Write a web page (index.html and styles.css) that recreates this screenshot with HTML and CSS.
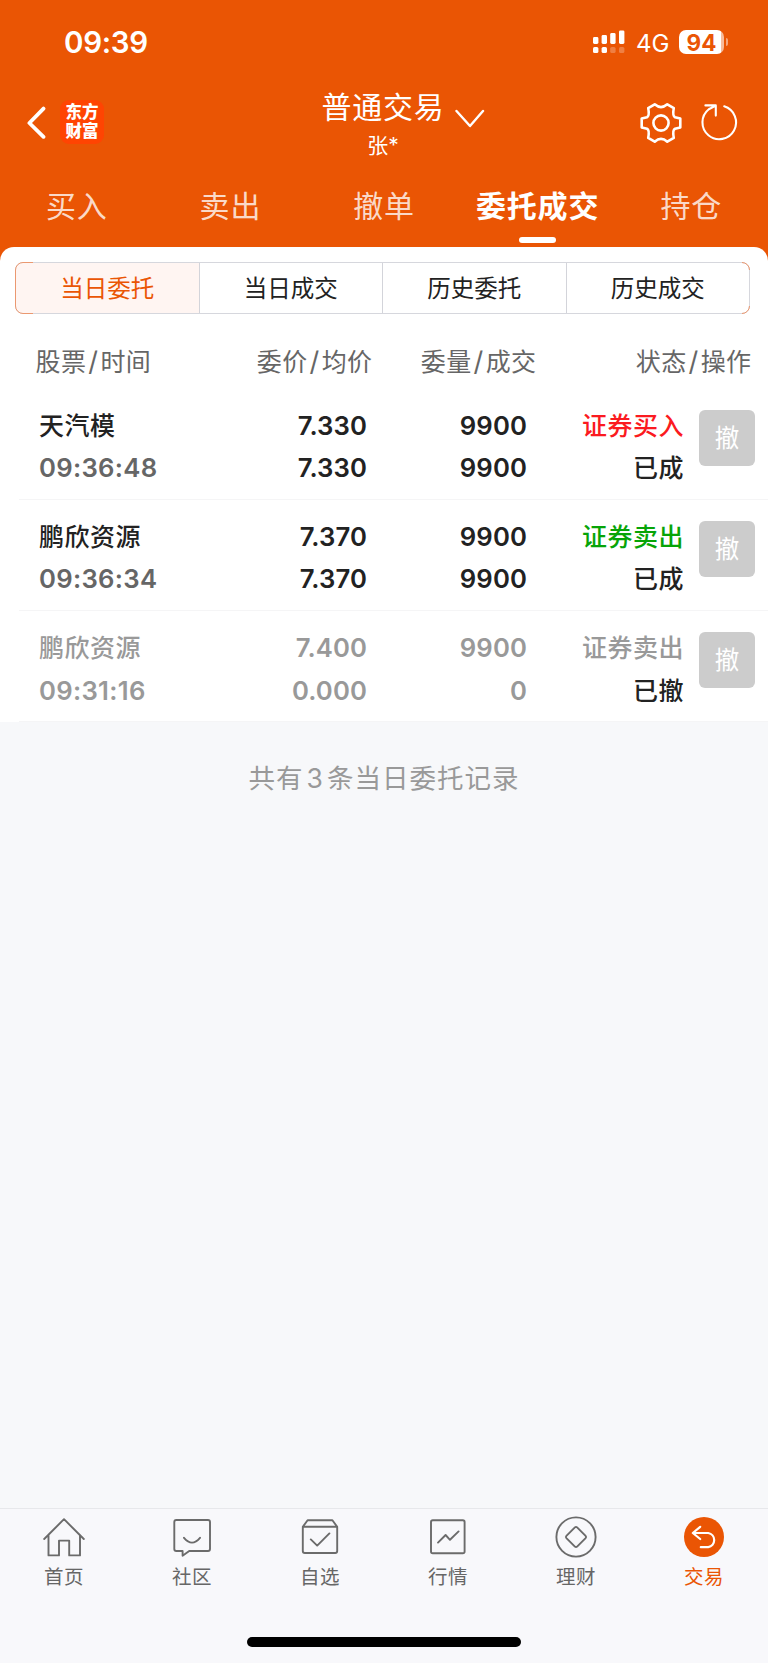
FILE: index.html
```html
<!DOCTYPE html>
<html lang="zh-CN">
<head>
<meta charset="utf-8">
<title>普通交易</title>
<link rel="stylesheet" href="styles.css">
</head>
<body>
<div class="app">
  <header class="top">
    <div class="status">
      <span class="clock">09:39</span>
      <svg class="signal" width="32" height="24" viewBox="0 0 32 24" fill="#fff">
        <rect x="0" y="7" width="5.4" height="7" rx="1.4"/><rect x="8.6" y="5" width="5.4" height="9" rx="1.4"/>
        <rect x="17.2" y="3" width="5.4" height="11" rx="1.4"/><rect x="26" y="0.4" width="5.4" height="13.6" rx="1.4"/>
        <rect x="0" y="17" width="5.4" height="6" rx="1.6"/><rect x="8.6" y="17" width="5.4" height="6" rx="1.6"/>
        <rect x="17.2" y="17" width="5.4" height="6" rx="1.6" opacity=".25"/><rect x="26" y="17" width="5.4" height="6" rx="1.6" opacity=".25"/>
      </svg>
      <span class="net">4G</span>
      <span class="battery"><b>94</b></span>
      <i class="nub"></i>
    </div>
    <div class="nav">
      <svg class="back" width="20" height="34" viewBox="0 0 20 34" fill="none" stroke="#fff" stroke-width="3.8" stroke-linecap="round" stroke-linejoin="round"><path d="M17.5 2.6 3.4 17 17.5 30.8"/></svg>
      <div class="logo"><span>东方</span><span>财富</span></div>
      <div class="heading">
        <div class="title">普通交易</div>
        <div class="who">张*</div>
      </div>
      <svg class="down" width="30" height="20" viewBox="0 0 30 20" fill="none" stroke="#fff" stroke-width="2.4" stroke-linecap="round" stroke-linejoin="round"><path d="M1.5 2 15 17 28 2"/></svg>
      <svg class="gear" width="42" height="42" viewBox="-21 -21 42 42" fill="none" stroke="#fff" stroke-width="2.6" stroke-linejoin="round">
        <path d="M-6.3 -18.7Q0 -13.2 6.3 -18.7L12.8 -14.9Q11.3 -7 14 -5.8L19.3 -4.4V4.4L14 5.8Q11.3 7 12.8 14.9L6.3 18.7Q0 13.2 -6.3 18.7L-12.8 14.9Q-11.3 7 -14 5.8L-19.3 4.4V-4.4L-14 -5.8Q-11.3 -7 -12.8 -14.9Z"/>
        <circle r="7.6"/>
      </svg>
      <svg class="reload" width="40" height="40" viewBox="0 0 40 40" fill="none" stroke="#fff" stroke-width="2.1" stroke-linecap="round" stroke-linejoin="round"><path d="M24.2 4.3A16.8 16.8 0 1 1 8.8 7.2L15.8 3.6M5.4 3.4H15.8V13.6"/></svg>
    </div>
    <nav class="tabs">
      <span>买入</span><span>卖出</span><span>撤单</span><span class="on">委托成交</span><span>持仓</span>
    </nav>
  </header>
  <main class="sheet">
    <div class="segments">
      <span class="sel">当日委托</span><span>当日成交</span><span>历史委托</span><span>历史成交</span>
    </div>
    <div class="cols">
      <span>股票<i>/</i>时间</span><span>委价<i>/</i>均价</span><span>委量<i>/</i>成交</span><span>状态<i>/</i>操作</span>
    </div>
    <div class="row">
      <div class="cell left"><span class="cn">天汽模</span><span class="time">09:36:48</span></div>
      <div class="cell"><span>7.330</span><span>7.330</span></div>
      <div class="cell"><span>9900</span><span>9900</span></div>
      <div class="cell"><span class="cn buy">证券买入</span><span class="cn">已成</span></div>
      <span class="cancel">撤</span>
    </div>
    <div class="row">
      <div class="cell left"><span class="cn">鹏欣资源</span><span class="time">09:36:34</span></div>
      <div class="cell"><span>7.370</span><span>7.370</span></div>
      <div class="cell"><span>9900</span><span>9900</span></div>
      <div class="cell"><span class="cn sell">证券卖出</span><span class="cn">已成</span></div>
      <span class="cancel">撤</span>
    </div>
    <div class="row dim">
      <div class="cell left"><span class="cn">鹏欣资源</span><span class="time">09:31:16</span></div>
      <div class="cell"><span>7.400</span><span>0.000</span></div>
      <div class="cell"><span>9900</span><span>0</span></div>
      <div class="cell"><span class="cn">证券卖出</span><span class="cn dark">已撤</span></div>
      <span class="cancel">撤</span>
    </div>
  </main>
  <p class="summary">共有<i>3</i>条当日委托记录</p>
  <footer class="bar">
    <div class="items">
      <div class="item"><svg width="44" height="44" viewBox="0 0 44 44"><path d="M2.2 23 22 3.2 41.8 23M6.5 19V39.4H17V24.6H27.2V39.4H38V19"/></svg><span>首页</span></div>
      <div class="item"><svg width="44" height="44" viewBox="0 0 44 44"><path d="M6.3 4H38a2 2 0 0 1 2 2V33a2 2 0 0 1-2 2H19.2L12.6 39.8V35H6.3a2 2 0 0 1-2-2V6a2 2 0 0 1 2-2ZM14 21.8Q22 31.4 30 21.8"/></svg><span>社区</span></div>
      <div class="item"><svg width="44" height="44" viewBox="0 0 44 44"><path d="M4.8 10.8 9.6 4.2H34.4L39.2 10.8V35a2 2 0 0 1-2 2H6.8a2 2 0 0 1-2-2ZM4.8 10.8H39.2M12.8 23.4 19.2 29.6 31.4 17.4"/></svg><span>自选</span></div>
      <div class="item"><svg width="44" height="44" viewBox="0 0 44 44"><rect x="5" y="4.2" width="33.6" height="33" rx="1.8"/><path d="M12 26.6 19.6 19 24 23.8 32.6 15.4"/></svg><span>行情</span></div>
      <div class="item"><svg width="44" height="44" viewBox="0 0 44 44"><circle cx="22" cy="21" r="19.6"/><path d="M20.9 11.4a1.6 1.6 0 0 1 2.2 0L31.6 19.9a1.6 1.6 0 0 1 0 2.2L23.1 30.6a1.6 1.6 0 0 1-2.2 0L12.4 22.1a1.6 1.6 0 0 1 0-2.2Z"/></svg><span>理财</span></div>
      <div class="item active"><svg width="44" height="44" viewBox="0 0 44 44"><circle class="disc" cx="22" cy="21" r="20"/><path class="light" d="M18.2 10.8 10.8 17 18.2 23M10.8 17H26.2A7.2 7.2 0 0 1 26.2 31.2H18.8"/></svg><span>交易</span></div>
    </div>
    <div class="home"></div>
  </footer>
</div>
</body>
</html>
```
FILE: styles.css
```css
* { box-sizing: border-box; }
body {
  margin: 0;
  font-family: Inter, "Noto Sans CJK SC", sans-serif;
  color: #222;
  background: #f7f8fa;
}
i { font-style: normal; }
svg { display: block; flex: none; }
.app { width: 768px; height: 1663px; display: flex; flex-direction: column; background: #f7f8fa; }

.top { height: 261px; background: #ea5504; color: #fff; flex: none; }
.status { height: 84px; padding-left: 64px; display: flex; align-items: center; }
.clock { font-size: 29.5px; font-weight: 600; letter-spacing: -.3px; width: 529px; line-height: 36px; }
.net { font-size: 24px; line-height: 30px; margin-left: 11px; width: 43px; padding-top: 3px; }
.battery {
  width: 45px; height: 24.5px; border-radius: 7px; line-height: 25px; text-align: center; font-size: 22.5px; color: #ea5504;
  background: linear-gradient(90deg, #fff 42px, #f7bb9b 42px);
}
.battery b { font-weight: 700; }
.nub { width: 2.5px; height: 8px; margin-left: 1.5px; border-radius: 0 3px 3px 0; background: #f5a67e; }

.nav { height: 80px; padding-left: 26px; display: flex; align-items: flex-start; }
.back { margin-top: 22px; }
.logo {
  width: 44px; height: 44px; margin: 16px 0 0 14px; padding-top: 3px; border-radius: 9px; background: #ff4402;
  text-align: center; font-weight: 900; font-size: 16.5px; line-height: 19px; display: flex; flex-direction: column;
}
.heading { width: 124px; margin-left: 217px; text-align: center; }
.title { font-size: 30px; line-height: 40px; letter-spacing: .8px; margin-top: 3px; white-space: nowrap; }
.who { font-size: 21px; line-height: 30px; margin-top: 4px; }
.down { margin: 25px 0 0 10px; }
.gear { margin: 17.5px 0 0 155px; }
.reload { margin: 18px 0 0 18px; }

.tabs { display: grid; grid-template-columns: repeat(5, 1fr); height: 83px; }
.tabs span {
  display: flex; flex-direction: column; align-items: center; font-size: 30px; line-height: 44px;
  letter-spacing: .8px; color: rgba(255, 255, 255, .8); padding-top: 20px; white-space: nowrap;
}
.tabs .on { color: #fff; font-weight: 700; }
.tabs .on::after { content: ""; width: 37px; height: 6px; border-radius: 3px; background: #fff; margin-top: 9px; }

.sheet { margin-top: -14px; padding-top: 15px; background: #fff; border-radius: 14px 14px 0 0; flex: none; }
.segments {
  position: relative; width: 735px; height: 51.5px; margin-left: 15px; border: 1px solid #d6d7dd; border-radius: 8px;
  display: grid; grid-template-columns: 182.5px 183.5px 183.5px 183.5px;
}
/* orange rim on the rounded ends */
.segments::after {
  content: ""; position: absolute; inset: -1px; border: 1px solid #eb9870; border-radius: 8px;
  clip-path: polygon(0 0, 18px 0, 18px 26px, 727px 26px, 727px 0, 735px 0, 735px 8px, 727px 8px, 727px 44px, 735px 44px, 735px 52px, 727px 52px, 727px 26px, 18px 26px, 18px 52px, 0 52px);
}
.segments span { text-align: center; font-size: 23.5px; line-height: 51px; height: 49.5px; border-left: 1px solid #d3d4da; }
.segments .sel { color: #ea5504; background: #fff5f2; border-left: 0; border-radius: 7px 0 0 7px; }

.cols {
  display: grid; grid-template-columns: 150px 187px 164px 215px; padding-left: 35.5px; height: 75px;
  font-size: 25px; line-height: 96px; color: #666; text-align: right; letter-spacing: .4px;
}
.cols span:first-child { text-align: left; }
.cols i { font-size: 27px; padding: 0 2px; }

.row {
  display: grid; grid-template-columns: 150px 178px 160px 157px 56px; height: 111.3px; margin-left: 19px; padding-left: 20px;
  border-bottom: 1.5px solid #f5f5f6; color: #222; font-size: 25.7px; font-weight: 600; letter-spacing: .1px;
}
.cell { display: flex; flex-direction: column; align-items: flex-end; padding-top: 16.2px; white-space: nowrap; }
.cell.left { align-items: flex-start; }
.cell span { line-height: 42.5px; height: 42.5px; }
.cell .cn { font-size: 25px; font-weight: 500; letter-spacing: .5px; }
.cell .time { color: #666; letter-spacing: .3px; }
.cell .buy { color: #fb1a20; }
.cell .sell { color: #07a407; }
.dim, .dim .cell .time { color: #999; }
.cell .dark { color: #222; }
.cancel {
  width: 56px; height: 56px; margin: 21px 0 0 15px; border-radius: 6px; background: #ccc; color: #fff;
  font-size: 24.5px; font-weight: 400; line-height: 56px; text-align: center; letter-spacing: 0;
}

.summary { margin: 34px 0 0; text-align: center; font-size: 26.5px; line-height: 44px; letter-spacing: 1px; color: #999; }
.summary i { padding: 0 3px; }

.bar { margin-top: auto; height: 155px; border-top: 1.5px solid #e7e8eb; background: #f8f8fb; flex: none; }
.items { display: grid; grid-template-columns: repeat(6, 1fr); height: 128px; }
.item { display: flex; flex-direction: column; align-items: center; padding-top: 7px; color: #666; font-size: 19.5px; line-height: 30px; letter-spacing: .4px; }
.item svg { fill: none; stroke: #6b6b6b; stroke-width: 1.9; stroke-linecap: round; stroke-linejoin: round; }
.item svg + span { margin-top: 1.5px; }
.active { color: #ea5504; }
.item .disc { fill: #ea5504; stroke: none; }
.item .light { stroke: #fff; stroke-width: 2.2; }
.home { width: 274px; height: 9.5px; border-radius: 5px; background: #000; margin: 0 auto; }
```
